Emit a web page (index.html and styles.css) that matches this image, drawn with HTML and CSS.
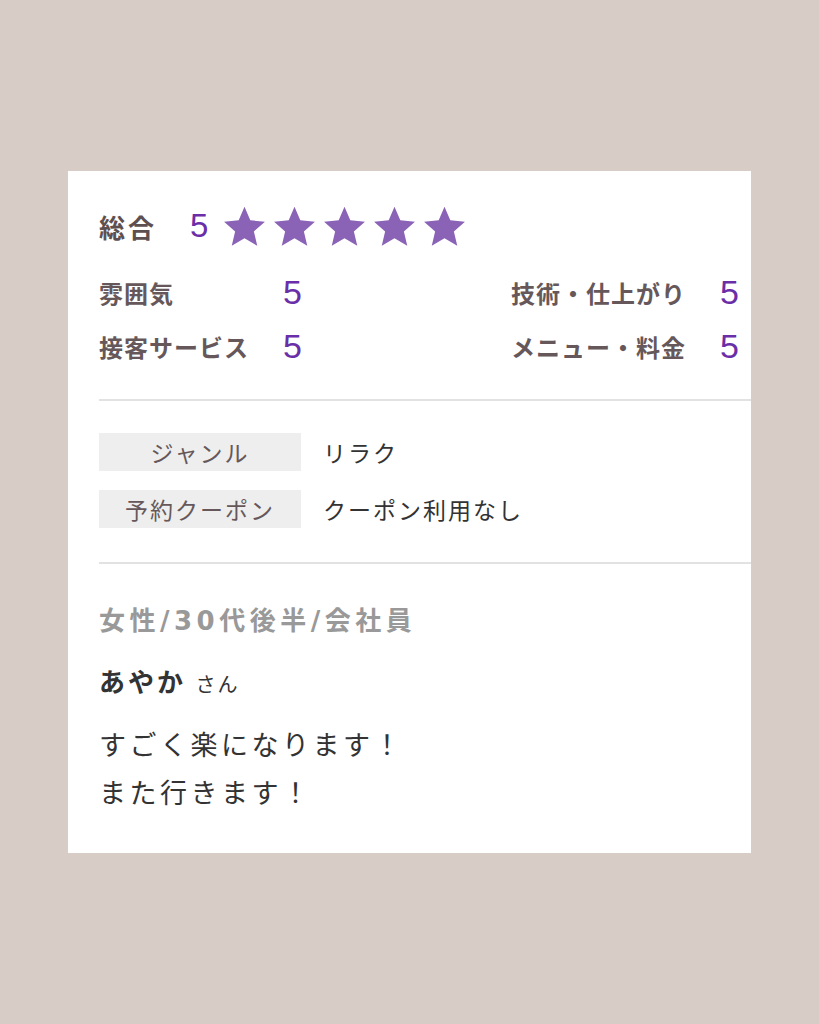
FILE: index.html
```html
<!DOCTYPE html>
<html lang="ja">
<head>
    <meta charset="UTF-8">
    <title>口コミ</title>
    <link rel="stylesheet" href="styles.css">
</head>
<body>
    <div class="card">
        <div class="total">
            <span class="total-label">総合</span>
            <span class="total-score">5</span>
            <span class="stars">
                <svg viewBox="0 0 24 24"><path d="M12 1.5l3.1 7.2 7.8.7-5.9 5.2 1.8 7.7L12 18.3l-6.8 4 1.8-7.7-5.9-5.2 7.8-.7z"/></svg>
                <svg viewBox="0 0 24 24"><path d="M12 1.5l3.1 7.2 7.8.7-5.9 5.2 1.8 7.7L12 18.3l-6.8 4 1.8-7.7-5.9-5.2 7.8-.7z"/></svg>
                <svg viewBox="0 0 24 24"><path d="M12 1.5l3.1 7.2 7.8.7-5.9 5.2 1.8 7.7L12 18.3l-6.8 4 1.8-7.7-5.9-5.2 7.8-.7z"/></svg>
                <svg viewBox="0 0 24 24"><path d="M12 1.5l3.1 7.2 7.8.7-5.9 5.2 1.8 7.7L12 18.3l-6.8 4 1.8-7.7-5.9-5.2 7.8-.7z"/></svg>
                <svg viewBox="0 0 24 24"><path d="M12 1.5l3.1 7.2 7.8.7-5.9 5.2 1.8 7.7L12 18.3l-6.8 4 1.8-7.7-5.9-5.2 7.8-.7z"/></svg>
            </span>
        </div>

        <div class="scores">
            <div class="score left"><span class="score-label">雰囲気</span><span class="score-num">5</span></div>
            <div class="score right"><span class="score-label">技術・仕上がり</span><span class="score-num">5</span></div>
            <div class="score left"><span class="score-label">接客サービス</span><span class="score-num">5</span></div>
            <div class="score right"><span class="score-label">メニュー・料金</span><span class="score-num">5</span></div>
        </div>

        <hr class="divider">

        <div class="info">
            <div class="info-row"><span class="info-label">ジャンル</span><span class="info-value">リラク</span></div>
            <div class="info-row"><span class="info-label">予約クーポン</span><span class="info-value">クーポン利用なし</span></div>
        </div>

        <hr class="divider">

        <div class="reviewer">
            <p class="profile">女性/30代後半/会社員</p>
            <p class="name"><b>あやか</b> <span>さん</span></p>
            <p class="comment">すごく楽になります！<br>また行きます！</p>
        </div>
    </div>
</body>
</html>
```

FILE: styles.css
```css
body {
    margin: 0;
    padding: 171px 0 0 68px;
    background-color: #d8ccc6;
    font-family: "Noto Sans CJK JP", "Liberation Sans", sans-serif;
}
.card {
    width: 652px;
    height: 649px;
    padding: 33px 0 0 31px;
    background-color: #fff;
}
.total {
    display: flex;
    align-items: center;
    height: 44px;
}
.total-label {
    width: 91px;
    font-size: 26px;
    font-weight: bold;
    letter-spacing: 3px;
    color: #5e5050;
}
.total-score {
    width: 32px;
    font-family: "Liberation Sans", sans-serif;
    font-size: 33px;
    color: #6a2ea8;
}
.stars {
    display: flex;
    gap: 5px;
}
.stars svg {
    width: 45px;
    height: 45px;
    fill: #8a62b6;
}
.scores {
    display: grid;
    grid-template-columns: 412px 1fr;
    row-gap: 20px;
    margin-top: 27px;
}
.score {
    display: flex;
    align-items: center;
    height: 34px;
}
.score-label {
    font-size: 24px;
    font-weight: bold;
    letter-spacing: 1px;
    color: #66585a;
}
.left .score-label { width: 184px; }
.right .score-label { width: 209px; }
.score-num {
    font-family: "Liberation Sans", sans-serif;
    font-size: 34px;
    color: #6a2ea8;
}
.divider {
    border: none;
    border-top: 2px solid #e2e2e2;
    margin: 36px 0 0;
}
.info {
    display: flex;
    flex-direction: column;
    gap: 19px;
    padding: 32px 0 34px;
}
.info-row {
    display: flex;
    align-items: center;
}
.info-label {
    width: 202px;
    height: 38px;
    line-height: 38px;
    text-align: center;
    background-color: #eeeeee;
    color: #66585a;
    font-size: 23px;
    letter-spacing: 2px;
}
.info-value {
    margin-left: 22px;
    font-size: 23px;
    letter-spacing: 2px;
    color: #333;
}
.info + .divider {
    margin-top: 0;
}
.reviewer p {
    margin: 0;
}
.profile {
    margin-top: 40px !important;
    font-family: "DejaVu Sans", "Noto Sans CJK JP", sans-serif;
    font-size: 26px;
    font-weight: bold;
    letter-spacing: 4.5px;
    line-height: 34px;
    color: #999;
}
.name {
    margin-top: 26px !important;
    line-height: 34px;
    color: #333;
}
.name b {
    font-size: 26px;
    letter-spacing: 3px;
}
.name span {
    margin-left: 6px;
    font-size: 20px;
    letter-spacing: 2px;
}
.comment {
    margin-top: 18px !important;
    font-size: 27px;
    line-height: 48px;
    letter-spacing: 3.5px;
    color: #333;
}
```
